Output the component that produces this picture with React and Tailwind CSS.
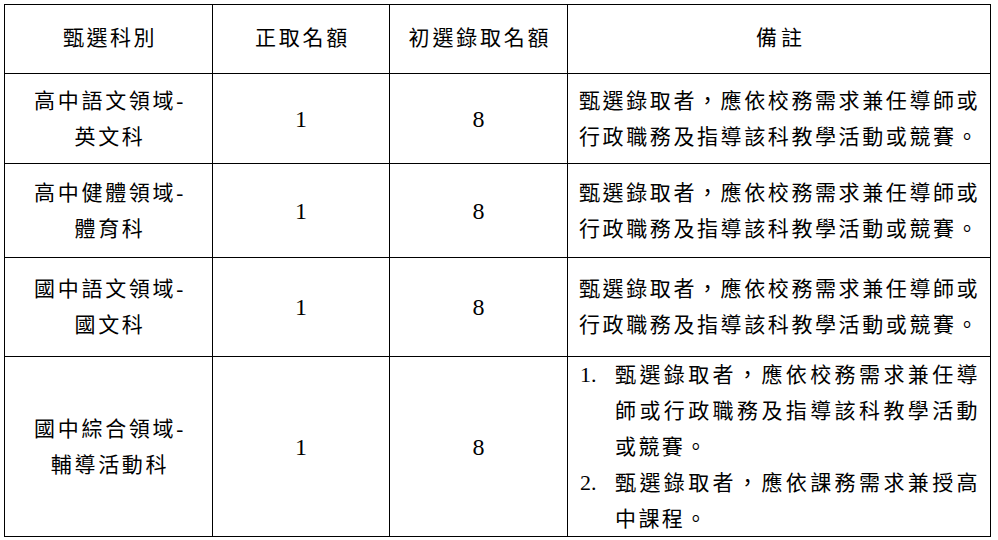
import React from "react";

const cjk = { fontFamily: '"Liberation Serif", "Noto Sans CJK TC", serif' };

function Cell({ children, className = "" }) {
  return (
    <div className={`border-r border-b border-black flex items-center justify-center ${className}`}>
      {children}
    </div>
  );
}

function Subject({ a, b }) {
  return (
    <div className="flex flex-col items-center leading-[36px] text-[21px] tracking-[2.7px] pl-[3px]">
      <div className="whitespace-nowrap">{a}</div>
      <div className="whitespace-nowrap">{b}</div>
    </div>
  );
}

function Num({ v }) {
  return <span className="text-[24px] leading-none">{v}</span>;
}

function Remark() {
  return (
    <div className="w-full pl-[11px] leading-[36px] text-[21px] tracking-[2.6px]">
      <div className="whitespace-nowrap">甄選錄取者，應依校務需求兼任導師或</div>
      <div className="whitespace-nowrap">行政職務及指導該科教學活動或競賽。</div>
    </div>
  );
}

export default function App() {
  const rows = [
    ["高中語文領域-", "英文科", "h-[90px]"],
    ["高中健體領域-", "體育科", "h-[94px]"],
    ["國中語文領域-", "國文科", "h-[99px]"],
  ];
  return (
    <div className="w-[998px] h-[540px] bg-white text-black pt-[4px] pl-[4px]" style={cjk}>
      <div className="grid grid-cols-[208px_177px_178px_423px] border-l border-t border-black w-[987px]">
        <Cell className="h-[69px]">
          <span className="text-[21px] tracking-[2.5px] pl-[3px]">甄選科別</span>
        </Cell>
        <Cell className="h-[69px]">
          <span className="text-[21px] tracking-[2.8px] pl-[3px]">正取名額</span>
        </Cell>
        <Cell className="h-[69px]">
          <span className="text-[21px] tracking-[2.8px] pl-[3px]">初選錄取名額</span>
        </Cell>
        <Cell className="h-[69px]">
          <span className="text-[21px] tracking-[4px] pl-[4px]">備註</span>
        </Cell>

        {rows.map(([a, b, h]) => (
          <React.Fragment key={a}>
            <Cell className={h}>
              <Subject a={a} b={b} />
            </Cell>
            <Cell className={h}>
              <Num v="1" />
            </Cell>
            <Cell className={h}>
              <Num v="8" />
            </Cell>
            <Cell className={`${h} justify-start`}>
              <Remark />
            </Cell>
          </React.Fragment>
        ))}

        <Cell className="h-[180px]">
          <Subject a="國中綜合領域-" b="輔導活動科" />
        </Cell>
        <Cell className="h-[180px]">
          <Num v="1" />
        </Cell>
        <Cell className="h-[180px]">
          <Num v="8" />
        </Cell>
        <Cell className="h-[180px] justify-start">
          <div className="w-full pl-[12px] leading-[36px] text-[21px]">
            <div className="flex whitespace-nowrap">
              <span className="w-[35px] shrink-0 text-[22px]">1.</span>
              <span className="tracking-[3.4px]">甄選錄取者，應依校務需求兼任導</span>
            </div>
            <div className="pl-[35px] whitespace-nowrap tracking-[3.4px]">師或行政職務及指導該科教學活動</div>
            <div className="pl-[35px] whitespace-nowrap tracking-[2.4px]">或競賽。</div>
            <div className="flex whitespace-nowrap">
              <span className="w-[35px] shrink-0 text-[22px]">2.</span>
              <span className="tracking-[3.4px]">甄選錄取者，應依課務需求兼授高</span>
            </div>
            <div className="pl-[35px] whitespace-nowrap tracking-[2.4px]">中課程。</div>
          </div>
        </Cell>
      </div>
    </div>
  );
}
